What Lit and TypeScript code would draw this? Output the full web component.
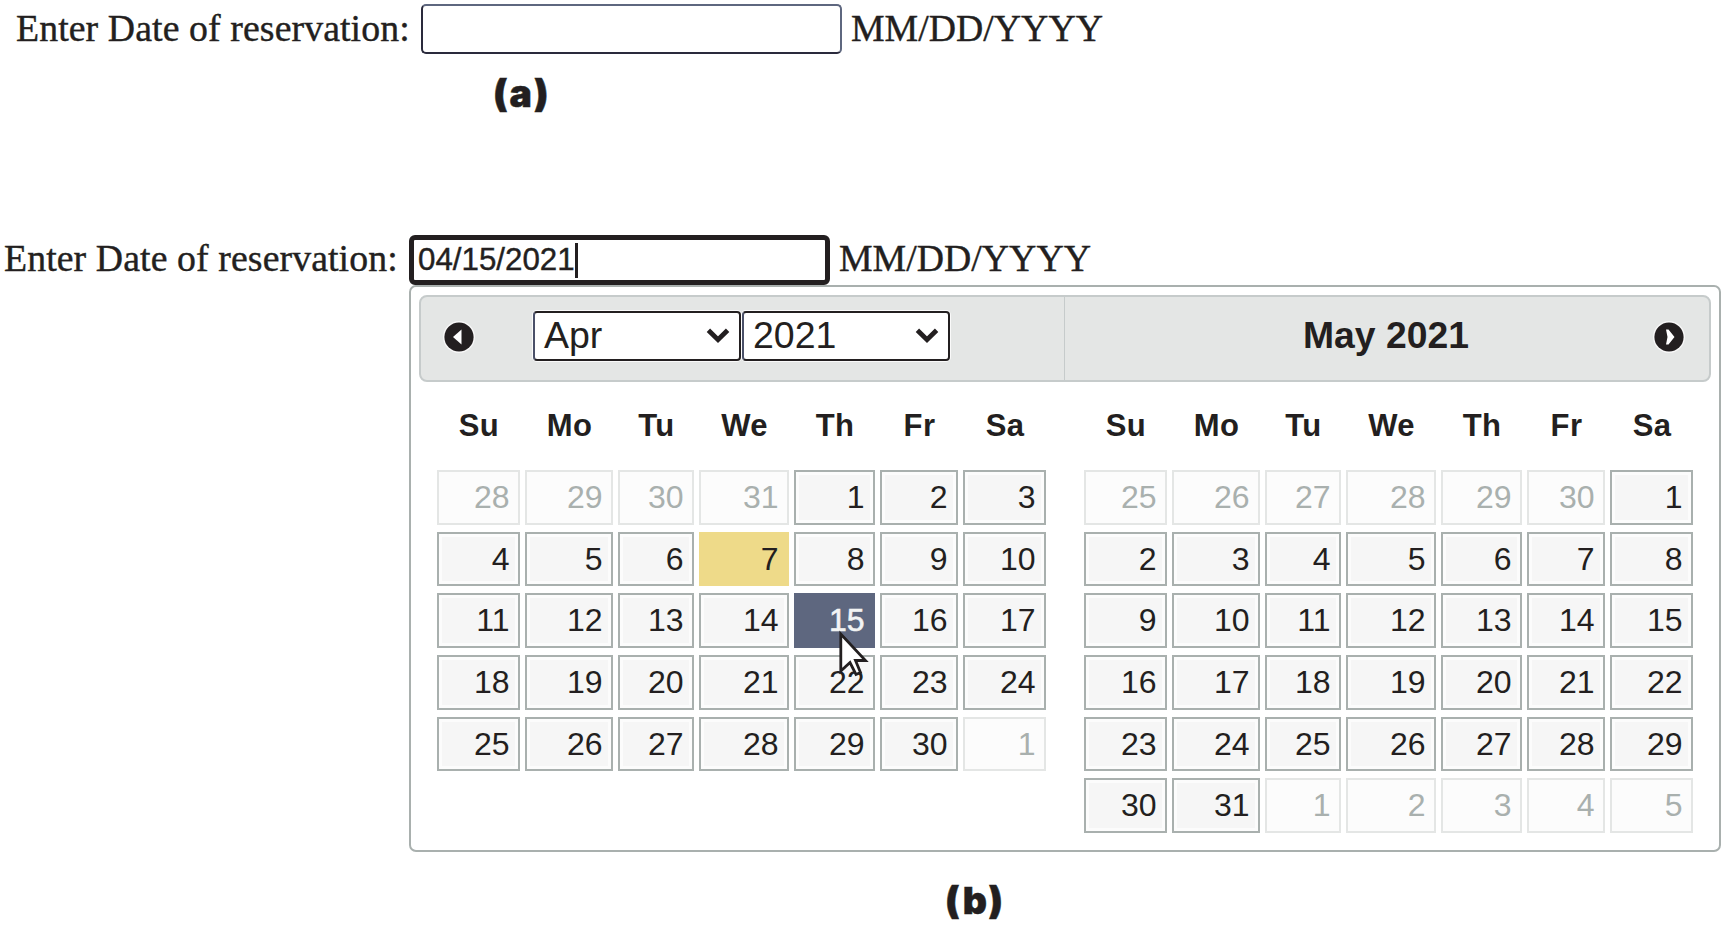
import { LitElement, html, css, svg } from "lit";
import { customElement, property } from "lit/decorators.js";
import { classMap } from "lit/directives/class-map.js";

const WEEKDAYS = ["Su", "Mo", "Tu", "We", "Th", "Fr", "Sa"];

interface Day {
  day: number;
  other: boolean;
}

function monthGrid(year: number, month: number): Day[] {
  const lead = new Date(year, month, 1).getDay();
  const length = new Date(year, month + 1, 0).getDate();
  const cells = Math.ceil((lead + length) / 7) * 7;
  return Array.from({ length: cells }, (_, i) => {
    const date = new Date(year, month, 1 - lead + i);
    return { day: date.getDate(), other: date.getMonth() !== month };
  });
}

const chevron = svg`<svg class="chevron" viewBox="0 0 24 15" width="24" height="15">
  <path d="M2.4 2.2 L12 11.6 L21.6 2.2" fill="none" stroke="#231f20" stroke-width="4.8"/></svg>`;

@customElement("month-table")
export class MonthTable extends LitElement {
  @property({ type: Number }) year = 2021;
  @property({ type: Number }) month = 0;
  @property({ type: Number }) today = 0;
  @property({ type: Number }) selected = 0;

  static styles = css`
    :host {
      display: block;
    }
    .grid {
      display: grid;
      grid-template-columns: 83px 88px 76px 90px 81px 78px 83px;
      column-gap: 5px;
    }
    .names {
      height: 88px;
      line-height: 88px;
      font-weight: bold;
      font-size: 31px;
      letter-spacing: 0.4px;
      text-indent: 1px;
      text-align: center;
    }
    .days {
      grid-auto-rows: 54.6px;
      row-gap: 7.1px;
    }
    .day {
      box-sizing: border-box;
      border: 2px solid #a9b0ae;
      background: #f6f6f6;
      box-shadow: inset 0 0 0 3px #fcfcfc;
      line-height: 50.4px;
      padding-right: 8.5px;
      text-align: right;
      font-size: 32px;
    }
    .other {
      border-color: #e4e6e5;
      background: #fcfcfc;
      color: #a9b0ae;
    }
    .today {
      border-color: #eeda89;
      background: #eeda89;
      box-shadow: none;
    }
    .selected {
      border-color: #5e677f;
      background: #5e677f;
      box-shadow: none;
      color: #f3f4f4;
      -webkit-text-stroke: 0.6px #f3f4f4;
    }
  `;

  render() {
    return html`
      <div class="grid names">${WEEKDAYS.map((n) => html`<span>${n}</span>`)}</div>
      <div class="grid days">
        ${monthGrid(this.year, this.month).map(
          (d) => html`<div
            class=${classMap({
              day: true,
              other: d.other,
              today: !d.other && d.day === this.today,
              selected: !d.other && d.day === this.selected,
            })}
          >${d.day}</div>`
        )}
      </div>
    `;
  }
}

@customElement("app-root")
export class AppRoot extends LitElement {
  static styles = css`
    :host {
      display: block;
      width: 1725px;
      height: 926px;
      overflow: hidden;
      background: #fff;
      color: #231f20;
      font-family: "Liberation Sans", Arial, sans-serif;
    }
    .figure {
      position: relative;
    }
    .first {
      height: 230px;
    }
    .row {
      display: flex;
      font-family: "Liberation Serif", "Times New Roman", serif;
      font-size: 37.8px;
      line-height: 57px;
      height: 55px;
      white-space: nowrap;
      -webkit-text-stroke: 0.4px #231f20;
    }
    .first .row {
      padding-left: 16px;
    }
    .second .row {
      padding-left: 4px;
    }
    .label {
      width: 405px;
      letter-spacing: 0.09px;
    }
    .format {
      margin-left: 9px;
    }
    .field {
      box-sizing: border-box;
      width: 421px;
      height: 50px;
      margin-top: 4px;
      border: 2px solid #2a2a3c;
      border-top-color: #5e677f;
      border-right-color: #5e677f;
      border-radius: 5px;
      display: flex;
      align-items: center;
      font-family: "Liberation Sans", Arial, sans-serif;
      font-size: 31.3px;
      line-height: 40px;
    }
    .focused {
      margin-top: 5px;
      height: 50px;
      border: 5px solid #231f20;
      border-radius: 6px;
      padding-left: 4px;
    }
    .caret {
      width: 3px;
      height: 35px;
      background: #231f20;
    }
    .caption {
      font-family: Inter, "Liberation Sans", sans-serif;
      font-weight: 900;
      font-size: 37.5px;
      line-height: 44px;
      letter-spacing: 2px;
      -webkit-text-stroke: 0.5px #231f20;
    }
    .first .caption {
      padding: 17px 0 0 493px;
    }
    .second .caption {
      padding: 27px 0 0 945px;
    }
    .popup {
      box-sizing: border-box;
      width: 1312px;
      height: 567px;
      margin-left: 409px;
      border: 2px solid #a9b0ae;
      border-radius: 7px;
      padding: 8px;
    }
    .header {
      box-sizing: border-box;
      height: 87px;
      display: flex;
      border: 2px solid #c6cbcb;
      border-radius: 8px;
      background: #e4e6e5;
    }
    .pane {
      display: flex;
      box-sizing: border-box;
    }
    .left {
      width: 644px;
      padding: 14px 0 0 22px;
      border-right: 1px solid #c6cbcb;
    }
    .right {
      flex: 1;
      padding: 14px 24px 0 238px;
      justify-content: space-between;
    }
    .nav {
      margin-top: 10px;
      flex: none;
    }
    .selects {
      display: flex;
      gap: 1px;
      margin-left: 58px;
      font-size: 37.5px;
    }
    .select {
      box-sizing: border-box;
      width: 208px;
      height: 50px;
      border: 2px solid #231f20;
      border-left-color: #4a5068;
      border-radius: 4px;
      background: #fff;
      box-shadow: 0 0 0 1px rgba(255, 255, 255, 0.8);
      display: flex;
      justify-content: space-between;
      align-items: center;
      line-height: 42px;
      padding: 0 9px 2px;
    }
    .title {
      font-size: 37.3px;
      font-weight: bold;
      line-height: 48px;
    }
    .months {
      display: flex;
      gap: 38px;
      padding-left: 18px;
    }
    .cursor {
      position: absolute;
      left: 838px;
      top: 400px;
    }
  `;

  private navIcon(points: string) {
    return html`<svg class="nav" width="32" height="32" viewBox="0 0 32 32">
      <circle cx="16" cy="16" r="16" fill="#f8f8f8" />
      <circle cx="16" cy="16" r="14.6" fill="#231f20" />
      <polygon points=${points} fill="#fff" />
    </svg>`;
  }

  render() {
    return html`
      <section class="figure first">
        <div class="row">
          <span class="label">Enter Date of reservation:</span>
          <div class="field"></div>
          <span class="format">MM/DD/YYYY</span>
        </div>
        <div class="caption">(a)</div>
      </section>
      <section class="figure second">
        <div class="row">
          <span class="label">Enter Date of reservation:</span>
          <div class="field focused"><span>04/15/2021</span><i class="caret"></i></div>
          <span class="format">MM/DD/YYYY</span>
        </div>
        <div class="popup">
          <div class="header">
            <div class="pane left">
              ${this.navIcon("10,16 18.5,8.5 18.5,23.5")}
              <div class="selects">
                <div class="select"><span>Apr</span>${chevron}</div>
                <div class="select"><span>2021</span>${chevron}</div>
              </div>
            </div>
            <div class="pane right">
              <span class="title">May 2021</span>
              ${this.navIcon("13,8.5 15.5,8.5 21.5,16 15.5,23.5 13,23.5 14.5,16")}
            </div>
          </div>
          <div class="months">
            <month-table .year=${2021} .month=${3} .today=${7} .selected=${15}></month-table>
            <month-table .year=${2021} .month=${4}></month-table>
          </div>
        </div>
        <div class="caption">(b)</div>
        <svg class="cursor" width="34" height="50" viewBox="0 0 34 50">
          <path
            d="M2.8 4 V41 L12 32.5 L18 44.5 L22.5 42.5 L17.5 30.5 H27.5 Z"
            fill="#fff" stroke="#231f20" stroke-width="2.8" stroke-linejoin="miter"
          />
        </svg>
      </section>
    `;
  }
}
